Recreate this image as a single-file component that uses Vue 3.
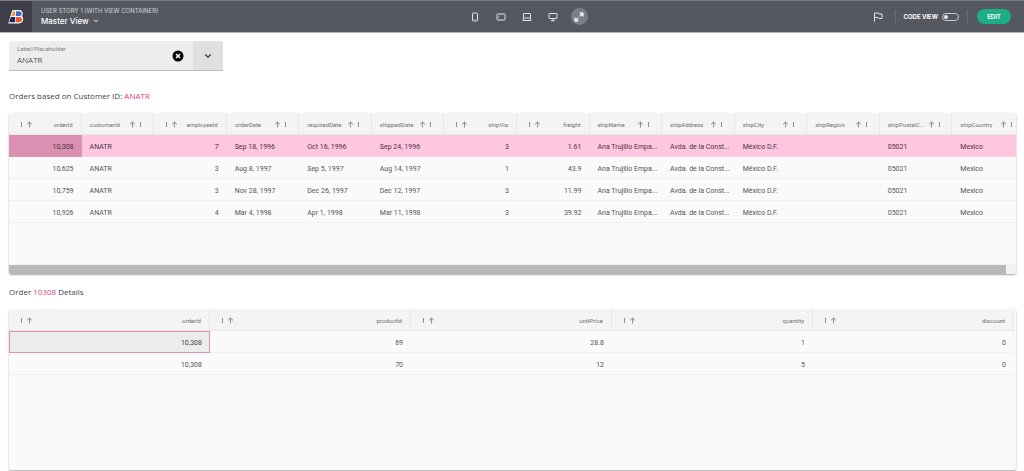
<script setup>
import { ref } from 'vue'

const customer = ref('ANATR')
const codeView = ref(false)

const orderColumns = [
  { key: 'orderId', num: true },
  { key: 'customerId' },
  { key: 'employeeId', num: true },
  { key: 'orderDate' },
  { key: 'requiredDate' },
  { key: 'shippedDate' },
  { key: 'shipVia', num: true },
  { key: 'freight', num: true },
  { key: 'shipName' },
  { key: 'shipAddress' },
  { key: 'shipCity' },
  { key: 'shipRegion' },
  { key: 'shipPostalC...' },
  { key: 'shipCountry' }
]
const place = ['Ana Trujillo Empa...', 'Avda. de la Const...', 'México D.F.', '', '05021', 'Mexico']
const orders = [
  ['10,308', 'ANATR', '7', 'Sep 18, 1996', 'Oct 16, 1996', 'Sep 24, 1996', '3', '1.61', ...place],
  ['10,625', 'ANATR', '3', 'Aug 8, 1997', 'Sep 5, 1997', 'Aug 14, 1997', '1', '43.9', ...place],
  ['10,759', 'ANATR', '3', 'Nov 28, 1997', 'Dec 26, 1997', 'Dec 12, 1997', '3', '11.99', ...place],
  ['10,926', 'ANATR', '4', 'Mar 4, 1998', 'Apr 1, 1998', 'Mar 11, 1998', '3', '39.92', ...place]
]

const detailColumns = ['orderId', 'productId', 'unitPrice', 'quantity', 'discount'].map((key) => ({ key, num: true }))
const details = [
  ['10,308', '69', '28.8', '1', '0'],
  ['10,308', '70', '12', '5', '0']
]

const grids = {
  orders: { name: 'orders', columns: orderColumns, rows: orders },
  details: { name: 'details', columns: detailColumns, rows: details }
}
</script>

<template>
  <div class="app">
    <header class="topbar">
      <a class="logo" href="#" aria-label="Home">
        <svg width="16" height="16" viewBox="0 0 16 16">
          <path d="M5.5 1h5.3c2.6 0 4 1.4 4 3.4 0 1.2-.5 2.1-1.2 2.7 1 .7 1.6 1.8 1.6 3.2 0 2.7-1.8 4.2-4.6 4.2H1.200c-.7 0-.9-.5-.7-1.100L3.800 2.500C4.200 1.500 4.600 1 5.500 1z" fill="#fff" />
          <path d="M5.600 2.200h1.600v4.900H3.200l1.400-4c.2-.6.5-.9 1-.9z" fill="#f59c4a" />
          <path d="M8 2.200h2.700c1.900 0 2.900.9 2.900 2.300 0 1.600-1.100 2.600-2.700 2.600H8z" fill="#4163d8" />
          <path d="M2.900 8h4.300v5.300H1.600c-.3 0-.4-.2-.3-.5z" fill="#262262" />
          <path d="M8 8h3.400c1.700 0 2.600.9 2.600 2.400 0 1.900-1.300 2.900-3.300 2.900H8z" fill="#f15a2b" />
        </svg>
      </a>
      <div class="bar">
        <div class="heading">
          <span class="story">USER STORY 1 (WITH VIEW CONTAINER)</span>
          <button class="view" type="button">
            Master View
            <svg width="6" height="4" viewBox="0 0 6 4"><path d="M1 .8l2 2 2-2" fill="none" stroke="currentColor" /></svg>
          </button>
        </div>
        <nav class="devices" aria-label="Preview size">
          <button type="button" aria-label="Phone">
            <svg width="10" height="10" viewBox="0 0 10 10"><rect x="2.500" y="1" width="5" height="8" rx=".8" /><path d="M4.500 7.600h1" /></svg>
          </button>
          <button type="button" aria-label="Tablet">
            <svg width="10" height="10" viewBox="0 0 10 10"><rect x="1" y="2" width="8" height="6" rx=".8" /><path d="M2.800 4.500v1" /></svg>
          </button>
          <button type="button" aria-label="Laptop">
            <svg width="10" height="10" viewBox="0 0 10 10"><rect x="1.500" y="1.500" width="7" height="4.500" rx=".5" /><path d="M1.500 6L1 8.500h8L8.500 6" /></svg>
          </button>
          <button type="button" aria-label="Desktop">
            <svg width="10" height="10" viewBox="0 0 10 10"><rect x="1" y="1.500" width="8" height="5" rx=".5" /><path d="M5 6.500v2M3 8.700h4" /></svg>
          </button>
          <button class="on" type="button" aria-label="Full size">
            <svg width="10" height="10" viewBox="0 0 10 10"><path d="M5.700 4.300L8 2M4.300 5.700L2 8" /><path class="solid" d="M5 .5h4.500V5zM.5 5v4.500H5z" /></svg>
          </button>
        </nav>
        <div class="actions">
          <button class="flag" type="button" aria-label="Flag">
            <svg width="10" height="10" viewBox="0 0 10 10"><path d="M1.500 9.500V1h3.800l.7 1h3v4.500H5.800l-.7-1H1.500" /></svg>
          </button>
          <label class="code">
            <span>CODE VIEW</span>
            <input v-model="codeView" type="checkbox" />
          </label>
          <button class="edit" type="button">EDIT</button>
        </div>
      </div>
    </header>

    <main>
      <div class="combo">
        <div class="field">
          <label for="customer">Label/Placeholder</label>
          <input id="customer" v-model="customer" type="text" />
        </div>
        <button class="clear" type="button" aria-label="Clear">
          <svg width="12" height="12" viewBox="0 0 12 12"><circle cx="6" cy="6" r="5.500" /><path d="M4 4l4 4M8 4L4 8" /></svg>
        </button>
        <button class="toggle" type="button" aria-label="Open list">
          <svg width="8" height="6" viewBox="0 0 8 6"><path d="M1.200 1.500L4 4.200l2.800-2.700" /></svg>
        </button>
      </div>

      <template v-for="grid in grids" :key="grid.name">
        <h2 v-if="grid.name === 'orders'">Orders based on Customer ID: <em>ANATR</em></h2>
        <h2 v-else>Order <em>10308</em> Details</h2>
        <section class="grid" :class="grid.name">
          <div class="body">
            <table>
              <thead>
                <tr>
                  <th v-for="col in grid.columns" :key="col.key" scope="col">
                    <div class="head" :class="{ num: col.num }">
                      <span class="name">{{ col.key }}</span>
                      <button type="button" :aria-label="'Sort ' + col.key">
                        <svg width="7" height="7" viewBox="0 0 7 7"><path d="M3.500 6.500V1M1 3.400L3.500 1 6 3.400" /></svg>
                      </button>
                      <button type="button" :aria-label="'Menu ' + col.key">
                        <svg width="3" height="7" viewBox="0 0 3 7"><path d="M1.500 1v5" /></svg>
                      </button>
                    </div>
                  </th>
                </tr>
              </thead>
              <tbody>
                <tr v-for="(row, r) in grid.rows" :key="r" :class="{ selected: r === 0 }">
                  <td v-for="(cell, c) in row" :key="c" :class="{ num: grid.columns[c].num }">{{ cell }}</td>
                </tr>
              </tbody>
            </table>
          </div>
          <div v-if="grid.name === 'orders'" class="scroll"><div class="thumb"></div></div>
        </section>
      </template>
    </main>
  </div>
</template>

<style>
body {
  margin: 0;
  background: #fff;
}
</style>

<style scoped>
.app {
  display: flex;
  flex-direction: column;
  min-height: 100vh;
  box-sizing: border-box;
  font-family: Roboto, "Noto Sans", sans-serif;
  font-size: 7px;
  color: #555;
}
button {
  display: flex;
  align-items: center;
  justify-content: center;
  margin: 0;
  padding: 0;
  border: 0;
  background: none;
  color: inherit;
  font: inherit;
}
svg {
  display: block;
  flex: none;
}

.topbar {
  display: flex;
  height: 33px;
  box-sizing: border-box;
  border-top: 1px solid #787a86;
  border-bottom: 1px solid #b4b5ba;
  background: #555761;
  color: #fff;
  font-family: Inter, sans-serif;
}
.logo {
  display: flex;
  align-items: center;
  justify-content: center;
  width: 32px;
  background: #3d3e47;
}
.bar {
  display: grid;
  grid-template-columns: minmax(0, 1fr) auto minmax(0, 1fr);
  align-items: center;
  flex: 1;
  padding-right: 2px;
}
.heading {
  padding-left: 9px;
}
.story {
  display: block;
  font-size: 6px;
  line-height: 8px;
  font-weight: 500;
  color: #c4c5cb;
}
.view {
  gap: 4px;
  font-size: 8px;
  line-height: 12px;
  font-weight: 500;
}
.devices {
  display: flex;
  gap: 9px;
}
.devices button {
  width: 17px;
  height: 17px;
  border-radius: 50%;
}
.devices svg,
.flag svg {
  fill: none;
  stroke: #e4e4e8;
  stroke-width: 1;
}
.devices .on {
  background: #7b7d87;
}
.devices .on svg {
  stroke-width: 1.400;
}
.devices .solid {
  fill: #fff;
  stroke: none;
}
.actions {
  display: flex;
  align-items: center;
  justify-content: flex-end;
  padding-right: 11px;
}
.flag {
  margin-right: 12px;
}
.code {
  display: flex;
  align-items: center;
  gap: 4px;
  height: 14px;
  padding: 0 8px;
  border-left: 1px solid #686a75;
  border-right: 1px solid #686a75;
  font-size: 6px;
  font-weight: 700;
}
.code input {
  display: flex;
  align-items: center;
  appearance: none;
  box-sizing: border-box;
  width: 17px;
  height: 8px;
  margin: 0;
  padding: 0 1px;
  border: 1px solid #c8c9cf;
  border-radius: 4px;
}
.code input::before {
  content: "";
  width: 4px;
  height: 4px;
  border-radius: 50%;
  background: #e4e4e8;
}
.code input:checked {
  justify-content: flex-end;
}
.edit {
  width: 34px;
  height: 15px;
  margin-left: 9px;
  border-radius: 8px;
  background: #1cae86;
  font-size: 6px;
  font-weight: 700;
}

main {
  display: flex;
  flex-direction: column;
  flex: 1;
  padding: 8px 8px 1px 9px;
}
.combo {
  display: flex;
  width: 214px;
  height: 30px;
  box-sizing: border-box;
  border-bottom: 1px solid #bdbdbd;
  border-radius: 3px 3px 0 0;
  background: #ededed;
  overflow: hidden;
}
.field {
  display: flex;
  flex-direction: column;
  flex: 1;
  min-width: 0;
  padding: 4px 0 0 8px;
}
.field label {
  font-size: 6px;
  line-height: 8px;
  color: #808080;
}
.field input {
  width: 100%;
  height: 12px;
  padding: 0;
  border: 0;
  outline: 0;
  background: none;
  font: 8px "Open Sans", sans-serif;
  color: #555;
}
.clear {
  width: 31px;
}
.clear circle {
  fill: #000;
}
.clear path {
  stroke: #fff;
  stroke-width: 1.500;
}
.toggle {
  width: 30px;
  background: #e0e0e0;
}
.toggle path {
  fill: none;
  stroke: #333;
  stroke-width: 1.300;
}

h2 {
  margin: 19px 0 11px;
  font-family: "Open Sans", sans-serif;
  font-size: 8px;
  line-height: 12px;
  font-weight: 400;
  color: #444;
}
.grid + h2 {
  margin: 12px 0 11px;
}
em {
  font-style: normal;
  color: #e0407f;
}

.grid {
  display: flex;
  flex-direction: column;
  border-radius: 2px;
  background: #fafafa;
  box-shadow: 0 1px 2px #00000059;
  overflow: hidden;
}
.orders {
  height: 161px;
}
.details {
  flex: 1;
}
.body {
  flex: 1;
  overflow: hidden;
}
.details .body {
  padding-right: 2px;
}
table {
  width: 100%;
  table-layout: fixed;
  border-collapse: separate;
  border-spacing: 0;
}
.orders table {
  width: calc(100% + 9px);
}
th {
  height: 22px;
  box-sizing: border-box;
  padding: 1px 0 0;
  border-right: 1px solid #e8e8e8;
  border-bottom: 1px solid #e8e8e8;
  background: #f4f4f4;
  font-weight: 400;
  color: #707070;
}
.head {
  display: flex;
  align-items: center;
  gap: 3px;
  padding: 0 11px 0 8px;
  font-size: 6px;
}
.head.num {
  flex-direction: row-reverse;
  padding: 0 8px 0 11px;
}
.name {
  flex: 1;
  text-align: left;
  white-space: nowrap;
}
.num .name {
  text-align: right;
}
.head path {
  fill: none;
  stroke: #8c8c8c;
  stroke-width: 1;
}
td {
  height: 22px;
  box-sizing: border-box;
  padding: 2px 8px 0;
  border-bottom: 1px solid #f0f0f0;
  white-space: nowrap;
}
td.num {
  text-align: right;
}
.orders .selected td {
  background: #fec6df;
  border-bottom-color: #fec6df;
  color: #4a3540;
}
.orders .selected td:first-child {
  background: #db8fb1;
  border-bottom-color: #db8fb1;
}
.details .selected td:first-child {
  border-bottom-color: #e68bb2;
  box-shadow: inset 1px 1px #e68bb2, inset -1px 0 #e68bb2;
  background: #ececec;
  color: #444;
}
.scroll {
  height: 10px;
  box-sizing: border-box;
  padding: 1px 0 0;
  background: #f2f2f2;
}
.thumb {
  width: 99%;
  height: 100%;
  background: #b9b9b9;
}
</style>
